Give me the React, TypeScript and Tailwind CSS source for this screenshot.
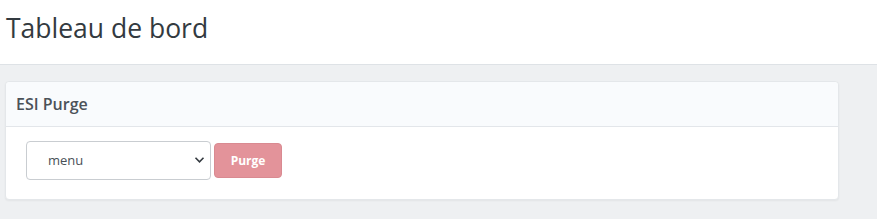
import React from "react";

function App() {
  return (
    <div className="min-h-[219px] w-[877px] bg-[#eef0f2] font-['Open_Sans',sans-serif]">
      <header className="h-[65px] bg-white border-b border-[#dee2e6] flex items-center px-[6px]">
        <h1 className="text-[26.5px] leading-none text-[#333a40] pb-[8px]">Tableau de bord</h1>
      </header>
      <div className="pt-[16px] pl-[5px]">
        <div className="w-[834px] bg-white rounded-[4px] border border-[#e4e7ea] shadow-[0_1px_2px_rgba(0,0,0,0.05)]">
          <div className="h-[45px] bg-[#f9fbfd] border-b border-[#e3e6ea] flex items-center px-[10px] rounded-t-[4px]">
            <h2 className="text-[16px] font-semibold text-[#4b5259]">ESI Purge</h2>
          </div>
          <div className="flex items-center gap-[3px] pt-[14px] pb-[19px] pl-[20px]">
            <div className="relative w-[185px] h-[39px]">
              <select
                defaultValue="menu"
                className="appearance-none w-full h-full rounded-[4px] border border-[#c9cdd1] bg-white pl-[21px] text-[13px] text-[#495057] outline-none"
              >
                <option value="menu">menu</option>
              </select>
              <svg
                className="absolute right-[6px] top-[15px] pointer-events-none"
                width="11"
                height="8"
                viewBox="0 0 11 8"
                fill="none"
              >
                <path d="M1.5 1.8 L5.5 5.8 L9.5 1.8" stroke="#343a40" strokeWidth="1.6" />
              </svg>
            </div>
            <button className="w-[68px] h-[35px] rounded-[4px] bg-[#e3939a] border border-[#d98a91] text-white text-[12px] font-bold">
              Purge
            </button>
          </div>
        </div>
      </div>
    </div>
  );
}

export default App;
